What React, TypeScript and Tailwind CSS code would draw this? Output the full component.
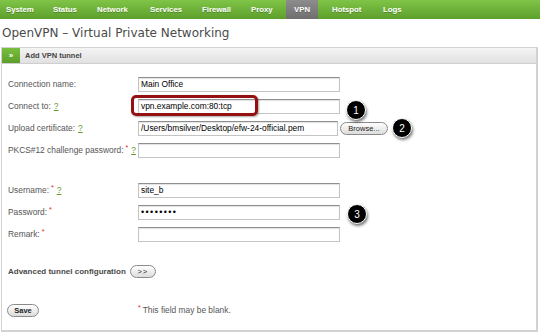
import React from 'react';

// ─── Top navigation ──────────────────────────────────────────────────────────

const NAV = [
  { label: 'System', w: 'w-[47px]' },
  { label: 'Status', w: 'w-[44px]' },
  { label: 'Network', w: 'w-[53px]' },
  { label: 'Services', w: 'w-[52px]' },
  { label: 'Firewall', w: 'w-[49px]' },
  { label: 'Proxy', w: 'w-[35px]' },
];

function NavBar() {
  return (
    <div className="flex h-[19px] items-stretch bg-gradient-to-b from-[#80c447] to-[#5d9f2c] pl-[6px] text-[7.8px] font-bold text-white [text-shadow:0_1px_0_rgba(0,0,0,0.25)]">
      {NAV.map((n) => (
        <div key={n.label} className={`flex items-center ${n.w}`}>{n.label}</div>
      ))}
      <div className="flex w-[32px] items-center bg-gradient-to-b from-[#8d8d8d] to-[#6f6f6f] pl-[8px]">VPN</div>
      <div className="ml-[14px] flex w-[51px] items-center">Hotspot</div>
      <div className="flex items-center">Logs</div>
    </div>
  );
}

// ─── Form bits ───────────────────────────────────────────────────────────────

const Help = () => <span className="ml-[3px] text-[#5f9a1e] underline decoration-[#5f9a1e]">?</span>;
const Req = () => <span className="ml-[2px] align-top text-[7px] leading-none text-[#e02020]">*</span>;

function TextBox({ value, w = 'w-[202px]', children }: { value?: string; w?: string; children?: React.ReactNode }) {
  return (
    <div className={`flex h-[15px] ${w} items-center border border-[#c4c4c4] border-t-[#8f8f8f] bg-white pl-[2px] text-[8.4px] text-black shadow-[inset_0_1px_1px_rgba(0,0,0,0.12)]`}>
      {children ?? value}
    </div>
  );
}

function Row({ label, children, req, help }: { label: string; children: React.ReactNode; req?: boolean; help?: boolean }) {
  return (
    <div className="flex h-[15px] items-center">
      <div className="w-[130px] text-[8.4px] text-[#555]">
        {label}
        {req && <Req />}
        {help && <Help />}
      </div>
      {children}
    </div>
  );
}

function Pill({ children, className = '' }: { children: React.ReactNode; className?: string }) {
  return (
    <div className={`flex h-[13px] items-center justify-center rounded-full border border-[#8a8a8a] bg-gradient-to-b from-white to-[#dcdcdc] text-[7.5px] text-[#222] ${className}`}>
      {children}
    </div>
  );
}

function Badge({ n, className }: { n: string; className: string }) {
  return (
    <div className={`absolute flex h-[20px] w-[20px] items-center justify-center rounded-full border-[1.5px] border-white bg-black text-[10px] text-white shadow-[1px_2px_3px_rgba(0,0,0,0.55)] ${className}`}>
      {n}
    </div>
  );
}

// ─── Page ────────────────────────────────────────────────────────────────────

export default function App() {
  return (
    <div className="relative h-[334px] w-[540px] overflow-hidden bg-white font-['Liberation_Sans',Arial,sans-serif]">
      <NavBar />

      <div className="pl-[2px] pt-[6px] font-['DejaVu_Sans',sans-serif] text-[12px] leading-[16px] text-[#4a4a4a]">
        OpenVPN – Virtual Private Networking
      </div>

      <div className="ml-px mt-[6px] h-[285px] w-[537px] border border-r-2 border-b-2 border-[#d2d2d2]">
        {/* Header */}
        <div className="flex h-[16px] items-stretch border-b border-[#cfcfcf] bg-gradient-to-b from-[#f4f4f4] to-[#e1e1e1]">
          <div className="flex w-[18px] items-center justify-center bg-gradient-to-b from-[#79bf3f] to-[#5c9e2b] text-[8px] font-bold text-white">»</div>
          <div className="flex items-center pl-[5px] text-[7.5px] font-bold text-[#444]">Add VPN tunnel</div>
        </div>

        {/* Body */}
        <div className="flex flex-col pl-[6px] pt-[13px]">
          <div className="flex flex-col gap-[7px]">
            <Row label="Connection name:">
              <TextBox value="Main Office" />
            </Row>
            <Row label="Connect to:" help>
              <TextBox value="vpn.example.com:80:tcp" />
            </Row>
            <Row label="Upload certificate:" help>
              <TextBox value="/Users/bmsilver/Desktop/efw-24-official.pem" w="w-[200px]" />
              <Pill className="ml-[2px] w-[48px]">Browse...</Pill>
            </Row>
            <Row label="PKCS#12 challenge password:" req help>
              <TextBox />
            </Row>
          </div>

          <div className="mt-[25px] flex flex-col gap-[7px]">
            <Row label="Username:" req help>
              <TextBox value="site_b" />
            </Row>
            <Row label="Password:" req>
              <TextBox>
                <span className="text-[9px] tracking-[1.4px]">••••••••</span>
              </TextBox>
            </Row>
            <Row label="Remark:" req>
              <TextBox />
            </Row>
          </div>

          <div className="mt-[23px] flex h-[13px] items-center">
            <span className="text-[8px] font-bold text-[#4a4a4a]">Advanced tunnel configuration</span>
            <Pill className="ml-[4px] w-[26px] tracking-[1px]">&gt;&gt;</Pill>
          </div>

          <div className="mt-[26px] flex h-[13px] items-center">
            <div className="w-[130px]">
              <Pill className="-ml-px w-[32px] font-bold">Save</Pill>
            </div>
            <span className="text-[8.4px] text-[#555]">
              <span className="mr-[2px] align-top text-[7px] leading-none text-[#e02020]">*</span>
              This field may be blank.
            </span>
          </div>
        </div>
      </div>

      {/* Callout overlays */}
      <div className="absolute left-[131px] top-[95px] h-[21px] w-[127px] rounded-[5px] border-[3.5px] border-[#951111] shadow-[1px_1px_2px_rgba(0,0,0,0.35)]" />
      <Badge n="1" className="left-[346px] top-[100px]" />
      <Badge n="2" className="left-[392px] top-[118px]" />
      <Badge n="3" className="left-[347px] top-[204px]" />
    </div>
  );
}
